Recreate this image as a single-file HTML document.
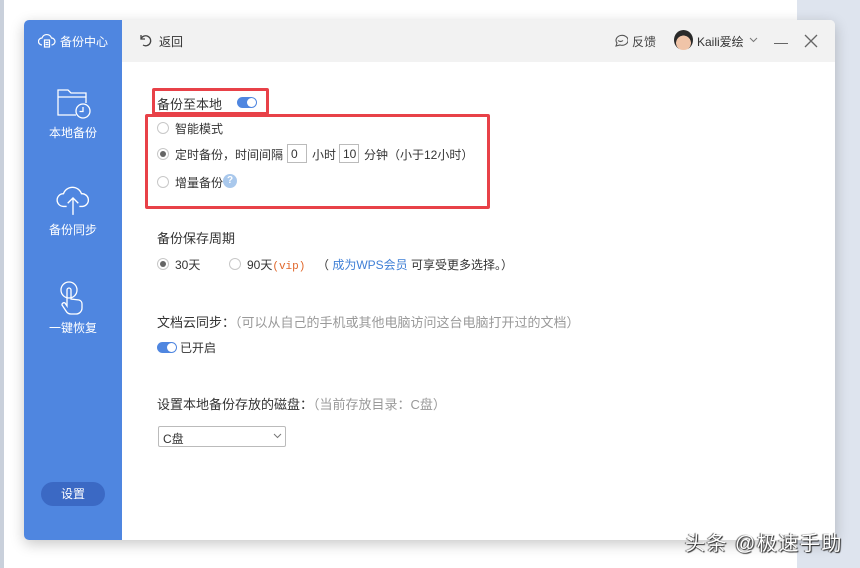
<!DOCTYPE html>
<html><head><meta charset="utf-8"><style>
*{margin:0;padding:0;box-sizing:border-box}
body{width:860px;height:568px;background:#fff;position:relative;overflow:hidden;font-family:"Liberation Sans","Noto Sans CJK SC",sans-serif;font-size:12px;color:#333}
.abs{position:absolute}
.lstrip{left:0;top:0;width:4px;height:568px;background:#c9d0db}
.rstrip{left:797px;top:0;width:63px;height:568px;background:#dee4ee}
.win{left:24px;top:20px;width:811px;height:520px;background:#fff;border-radius:5px;overflow:hidden;box-shadow:0 4px 14px rgba(0,0,0,.22)}
.side{left:0;top:0;width:98px;height:520px;background:#4f86e0;color:#fff}
.head{left:98px;top:0;width:713px;height:42px;background:#f2f2f2}
.t{position:absolute;white-space:nowrap}
.radio{position:absolute;width:12px;height:12px;border:1px solid #c8c8c8;border-radius:50%;background:#fff}
.radio.on::after{content:"";position:absolute;left:2px;top:2px;width:6px;height:6px;border-radius:50%;background:#666}
.tog{position:absolute;width:20px;height:11px;border-radius:6px;background:#4f86e0}
.tog::after{content:"";position:absolute;right:1px;top:1px;width:9px;height:9px;border-radius:50%;background:#fff}
.box{position:absolute;border:1px solid #bbb;height:19px;font-size:12px;padding:2px 3px}
.red{position:absolute;border:3px solid #e84148;border-radius:2px}
</style></head><body>
<div class="abs lstrip"></div><div class="abs rstrip"></div>
<div class="abs win">
 <div class="abs side">
  <svg class="abs" style="left:14px;top:12px" width="18" height="18" viewBox="0 0 18 18" fill="none" stroke="#fff" stroke-width="1.2"><path d="M4 13a3.5 3.5 0 0 1 0-7 5 5 0 0 1 9.5 0 3.5 3.5 0 0 1 0 7"/><rect x="6.5" y="8" width="5" height="7"/><path d="M7.5 10.5h3M7.5 12.5h3"/></svg>
  <div class="t" style="left:36px;top:13px;font-size:12px">备份中心</div>
  <svg class="abs" style="left:32px;top:68px" width="36" height="32" viewBox="0 0 36 32" fill="none" stroke="#fff" stroke-width="1.3"><path d="M20 27H2V2h10l3 3h15v10"/><path d="M2 9h28"/><circle cx="27" cy="23" r="7"/><path d="M27 19v4.5h-3.5"/></svg>
  <div class="t" style="left:25px;top:104px;font-size:12px">本地备份</div>
  <svg class="abs" style="left:31px;top:162px" width="36" height="34" viewBox="0 0 34 32" fill="none" stroke="#fff" stroke-width="1.3"><path d="M11 23H8a6 6 0 0 1 0-12 9 9 0 0 1 17 0 6 6 0 0 1 1 12h-3"/><path d="M17 31V15M12 20l5-5 5 5"/></svg>
  <div class="t" style="left:25px;top:201px;font-size:12px">备份同步</div>
  <svg class="abs" style="left:33px;top:260px" width="32" height="36" viewBox="0 0 32 36" fill="none" stroke="#fff" stroke-width="1.3"><circle cx="12" cy="10" r="8"/><path d="M10 26V10a2 2 0 0 1 4 0v9l8 1a4 4 0 0 1 3 4v4a6 6 0 0 1-6 6h-5a6 6 0 0 1-5-3l-4-6a2 2 0 0 1 3-2z"/></svg>
  <div class="t" style="left:25px;top:299px;font-size:12px">一键恢复</div>
  <div class="abs" style="left:17px;top:462px;width:64px;height:24px;border-radius:12px;background:#3b69c4;text-align:center;line-height:24px;font-size:12px">设置</div>
 </div>
 <div class="abs head">
  <svg class="abs" style="left:16px;top:13px" width="14" height="14" viewBox="0 0 14 14" fill="none" stroke="#444" stroke-width="1.3"><path d="M3 2v4h4"/><path d="M3 6a5 5 0 1 1 2 6"/></svg>
  <div class="t" style="left:37px;top:13px;color:#333">返回</div>
  <svg class="abs" style="left:491px;top:13px" width="15" height="15" viewBox="0 0 15 15" fill="none" stroke="#555" stroke-width="1.1"><path d="M3 13l1-3a6 5 0 1 1 3 2z"/><path d="M5 7.5q2.5 2 5 0"/></svg>
  <div class="t" style="left:510px;top:13px;color:#444">反馈</div>
  <div class="abs" style="left:552px;top:10px;width:19px;height:20px;border-radius:50%;background:radial-gradient(circle at 50% 65%,#f0c4a8 45%,#2a2a2a 47%)"></div>
  <div class="t" style="left:575px;top:13px;color:#333">Kaili爱绘</div>
  <svg class="abs" style="left:627px;top:17px" width="9" height="6" viewBox="0 0 9 6" fill="none" stroke="#777"><path d="M1 1l3.5 3.5L8 1"/></svg>
  <div class="abs" style="left:652px;top:23px;width:14px;height:1px;background:#666"></div>
  <svg class="abs" style="left:682px;top:14px" width="14" height="14" viewBox="0 0 14 14" stroke="#666" stroke-width="1.3"><path d="M1 1l12 12M13 1L1 13"/></svg>
 </div>
 <div class="red" style="left:128px;top:68px;width:117px;height:27px"></div>
 <div class="red" style="left:121px;top:94px;width:345px;height:95px"></div>
 <div class="t" style="left:133px;top:74px;font-size:13px">备份至本地</div>
 <div class="tog" style="left:213px;top:77px"></div>
 <div class="radio" style="left:133px;top:102px"></div><div class="t" style="left:151px;top:100px">智能模式</div>
 <div class="radio on" style="left:133px;top:128px"></div><div class="t" style="left:151px;top:126px">定时备份，时间间隔</div>
 <div class="box" style="left:263px;top:124px;width:20px">0</div><div class="t" style="left:288px;top:126px">小时</div>
 <div class="box" style="left:315px;top:124px;width:20px">10</div><div class="t" style="left:340px;top:126px">分钟（小于12小时）</div>
 <div class="radio" style="left:133px;top:156px"></div><div class="t" style="left:151px;top:154px">增量备份</div>
 <div class="abs" style="left:199px;top:154px;width:14px;height:14px;border-radius:50%;background:#a9c8ec;color:#fff;font-size:10px;text-align:center;line-height:14px;font-weight:bold">?</div>
 <div class="t" style="left:133px;top:208px;font-size:13px">备份保存周期</div>
 <div class="radio on" style="left:133px;top:238px"></div><div class="t" style="left:151px;top:236px">30天</div>
 <div class="radio" style="left:205px;top:238px"></div><div class="t" style="left:223px;top:236px">90天<span style="color:#e0662a;font-family:'Liberation Mono',monospace;font-size:11px">(vip)</span></div>
 <div class="t" style="left:293px;top:236px">（ <span style="color:#3f7fd6">成为WPS会员</span> 可享受更多选择。）</div>
 <div class="t" style="left:133px;top:292px;font-size:13px">文档云同步：<span style="color:#999">（可以从自己的手机或其他电脑访问这台电脑打开过的文档）</span></div>
 <div class="tog" style="left:133px;top:322px"></div><div class="t" style="left:156px;top:319px">已开启</div>
 <div class="t" style="left:133px;top:374px;font-size:13px">设置本地备份存放的磁盘：<span style="color:#999">（当前存放目录：C盘）</span></div>
 <div class="abs" style="left:134px;top:406px;width:128px;height:21px;border:1px solid #bbb;border-radius:2px;padding:3px 4px">C盘</div>
 <svg class="abs" style="left:249px;top:413px" width="9" height="6" viewBox="0 0 9 6" fill="none" stroke="#777"><path d="M1 1l3.5 3.5L8 1"/></svg>
</div>
<div class="t" style="left:685px;top:527px;font-size:20px;letter-spacing:1.5px;color:#fff;text-shadow:1px 1px 1px #222,-1px 0 1px #444">头条 @极速手助</div>
</body></html>
